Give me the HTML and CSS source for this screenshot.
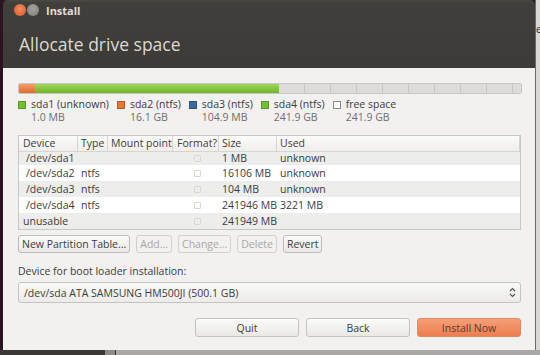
FILE: index.html
```html
<!DOCTYPE html>
<html lang="en">
<head>
  <meta charset="UTF-8" />
  <title>Install</title>
  <link rel="stylesheet" href="styles.css">
</head>
<body>
  <div class="screen">
    <div class="edge-left"></div>
    <div class="window">
      <div class="header">
        <div class="titlebar">
          <span class="btn-close"></span>
          <span class="btn-min"></span>
          <span class="title">Install</span>
        </div>
        <h1>Allocate drive space</h1>
      </div>

      <div class="content">
        <div class="diskbar">
          <div class="seg orange" style="width: 3.2%"></div>
          <div class="seg green" style="width: 48.5%"></div>
          <div class="seg free"></div>
        </div>

        <div class="legend">
          <div class="leg"><span class="sw green"></span><div><div>sda1 (unknown)</div><div class="sub">1.0 MB</div></div></div>
          <div class="leg"><span class="sw orange"></span><div><div>sda2 (ntfs)</div><div class="sub">16.1 GB</div></div></div>
          <div class="leg"><span class="sw blue"></span><div><div>sda3 (ntfs)</div><div class="sub">104.9 MB</div></div></div>
          <div class="leg"><span class="sw green"></span><div><div>sda4 (ntfs)</div><div class="sub">241.9 GB</div></div></div>
          <div class="leg"><span class="sw empty"></span><div><div>free space</div><div class="sub">241.9 GB</div></div></div>
        </div>

        <div class="table">
          <div class="row head">
            <div class="c dev">Device</div>
            <div class="c type">Type</div>
            <div class="c mount">Mount point</div>
            <div class="c fmt">Format?</div>
            <div class="c size">Size</div>
            <div class="c used">Used</div>
          </div>
          <div class="body">
            <div class="row odd first">
              <div class="c dev">/dev/sda1</div><div class="c type"></div><div class="c mount"></div>
              <div class="c fmt"><span class="chk"></span></div><div class="c size">1 MB</div><div class="c used">unknown</div>
            </div>
            <div class="row">
              <div class="c dev">/dev/sda2</div><div class="c type">ntfs</div><div class="c mount"></div>
              <div class="c fmt"><span class="chk"></span></div><div class="c size">16106 MB</div><div class="c used">unknown</div>
            </div>
            <div class="row odd">
              <div class="c dev">/dev/sda3</div><div class="c type">ntfs</div><div class="c mount"></div>
              <div class="c fmt"><span class="chk"></span></div><div class="c size">104 MB</div><div class="c used">unknown</div>
            </div>
            <div class="row">
              <div class="c dev">/dev/sda4</div><div class="c type">ntfs</div><div class="c mount"></div>
              <div class="c fmt"><span class="chk"></span></div><div class="c size">241946 MB</div><div class="c used">3221 MB</div>
            </div>
            <div class="row odd">
              <div class="c dev plain">unusable</div><div class="c type"></div><div class="c mount"></div>
              <div class="c fmt"><span class="chk"></span></div><div class="c size">241949 MB</div><div class="c used"></div>
            </div>
          </div>
        </div>

        <div class="tools">
          <button>New Partition Table...</button>
          <button disabled>Add...</button>
          <button disabled>Change...</button>
          <button disabled>Delete</button>
          <button>Revert</button>
        </div>

        <div class="boot-label">Device for boot loader installation:</div>
        <div class="combo">
          <span>/dev/sda ATA SAMSUNG HM500JI (500.1 GB)</span>
          <svg width="7" height="11" viewBox="0 0 7 11"><path d="M1 4 L3.5 1.5 L6 4" fill="none" stroke="#555" stroke-width="1.2"/><path d="M1 7 L3.5 9.5 L6 7" fill="none" stroke="#555" stroke-width="1.2"/></svg>
        </div>

        <div class="actions">
          <button class="big">Quit</button>
          <button class="big">Back</button>
          <button class="big primary">Install Now</button>
        </div>
      </div>
    </div>
    <div class="edge-right"><span>e</span></div>
    <div class="bottom"><div class="b1"></div><div class="b2"></div><div class="b3"></div></div>
  </div>
</body>
</html>
```

FILE: styles.css
```css
* {
  box-sizing: border-box;
}
body {
  margin: 0;
  width: 540px;
  height: 355px;
  overflow: hidden;
  background: #2c1a24;
  font-family: "Open Sans", "DejaVu Sans", sans-serif;
  font-size: 10.5px;
  color: #3c3c3c;
}
.screen {
  position: relative;
  display: flex;
  height: 350px;
}
.edge-left {
  width: 3px;
  background: #2a1420;
}
.window {
  width: 532px;
  display: flex;
  flex-direction: column;
  border-radius: 5px 5px 0 0;
  overflow: hidden;
}
.edge-right {
  width: 5px;
  background: #d9d8d4;
  border-left: 1px solid #6b6a66;
  font-size: 10px;
  color: #222;
  overflow: hidden;
  padding-top: 22px;
}
.header {
  height: 68px;
  background: linear-gradient(#4a4944 0, #403f3b 3px, #3c3b37 100%);
}
.titlebar {
  display: flex;
  align-items: center;
  height: 20px;
  padding-left: 11px;
}
.btn-close {
  width: 12px;
  height: 12px;
  border-radius: 50%;
  background: radial-gradient(circle at 50% 40%, #f48b5c, #d9582c);
  margin-right: 1px;
}
.btn-min {
  width: 12px;
  height: 12px;
  border-radius: 50%;
  background: radial-gradient(circle at 50% 40%, #a4a39e, #7e7d79);
}
.title {
  margin-left: 7px;
  color: #e2ded5;
  font-weight: bold;
  font-size: 11px;
}
h1 {
  margin: 12px 0 0 16px;
  font-weight: normal;
  font-size: 17.5px;
  color: #dcd9d2;
}
.content {
  flex: 1;
  background: #f2f1f0;
  padding: 15px 13px 0 15px;
}
.diskbar {
  display: flex;
  height: 11px;
  border: 1px solid #c8c6c1;
  border-radius: 2px;
  overflow: hidden;
}
.seg.orange {
  background: linear-gradient(#f4a069, #e0692e);
}
.seg.green {
  background: linear-gradient(#9fd85a, #6db52c);
}
.seg.free {
  flex: 1;
  background: repeating-linear-gradient(90deg, #dedcd8 0, #dedcd8 25px, #c9c7c2 25px, #c9c7c2 26px);
}
.legend {
  display: flex;
  margin-top: 4px;
  line-height: 13px;
}
.leg {
  display: flex;
  margin-right: 8px;
}
.leg .sub {
  color: #6f6d69;
}
.sw {
  width: 8px;
  height: 8px;
  margin: 3px 5px 0 0;
  border: 1px solid rgba(0, 0, 0, 0.2);
}
.sw.green { background: #73c02f; }
.sw.orange { background: #e9762f; }
.sw.blue { background: #3d6a9e; }
.sw.empty { background: #fff; border-color: #8a8884; }
.table {
  margin-top: 11px;
  width: 503px;
  height: 95px;
  border: 1px solid #c9c7c2;
  background: #fff;
  overflow: hidden;
}
.row {
  display: flex;
  height: 16px;
  line-height: 16px;
}
.row.head {
  height: 16px;
  line-height: 15px;
  background: linear-gradient(#fbfbfa, #efeeec);
  border-bottom: 1px solid #d7d5d1;
}
.row.head .c {
  border-right: 1px solid #d7d5d1;
}
.row.first {
  height: 13px;
  line-height: 12px;
}
.row.odd {
  background: #ededeb;
}
.c {
  padding-left: 3px;
  white-space: nowrap;
  overflow: hidden;
}
.c.dev { width: 59px; padding-left: 4px; }
.body .c.dev { padding-left: 7px; }
.body .c.dev.plain { padding-left: 4px; }
.c.type { width: 30px; }
.c.mount { width: 65px; }
.c.fmt { width: 46px; text-align: center; }
.c.size { width: 58px; }
.c.used { flex: 1; }
.chk {
  display: inline-block;
  width: 7px;
  height: 7px;
  border: 1px solid #dad8d4;
  border-radius: 1px;
}
.tools {
  display: flex;
  gap: 6px;
  margin-top: 5px;
}
button {
  font-family: inherit;
  font-size: 10.5px;
  height: 18px;
  padding: 0 3px;
  color: #3c3c3c;
  background: linear-gradient(#fbfbfa, #e9e8e5);
  border: 1px solid #bdbbb6;
  border-radius: 3px;
}
button:disabled {
  color: #a9a7a3;
  border-color: #d3d1cc;
  background: #f2f1f0;
}
.boot-label {
  margin-top: 11px;
}
.combo {
  display: flex;
  align-items: center;
  justify-content: space-between;
  margin-top: 4px;
  width: 503px;
  height: 21px;
  padding: 0 4px 0 5px;
  border: 1px solid #c6c4bf;
  border-radius: 3px;
  background: linear-gradient(#fafaf9, #ecebe8);
}
.actions {
  display: flex;
  justify-content: flex-end;
  gap: 7px;
  margin-top: 15px;
  width: 503px;
}
button.big {
  width: 104px;
  height: 19px;
  border-color: #c4c2bd;
}
button.primary {
  color: #5a3a2c;
  background: linear-gradient(#f69f78, #ec7e4f);
  border-color: #e08a62;
}
.bottom {
  position: absolute;
  left: 0;
  top: 350px;
  width: 540px;
  height: 5px;
  display: flex;
}
.b1 { width: 105px; background: #3a3935; }
.b2 { width: 10px; background: #8d8c88; }
.b3 { flex: 1; background: #a9a8a4; border-left: 1px solid #333; }
```
